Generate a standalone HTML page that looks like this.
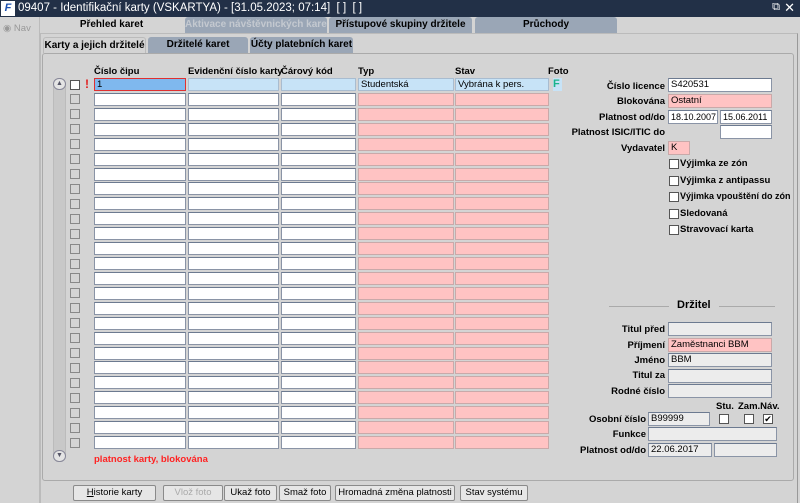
<!DOCTYPE html>
<html><head><meta charset="utf-8"><style>
*{box-sizing:border-box;margin:0;padding:0;white-space:nowrap}
body{width:800px;height:503px;background:#d4d4d4;font-family:"Liberation Sans",sans-serif;font-size:10px;position:relative;overflow:hidden;color:#000}
.a{position:absolute}
.tb{left:0;top:0;width:800px;height:17px;background:#223047;color:#fff;font-size:11.5px;line-height:17px;padding-left:18px}
.tab{position:absolute;height:16px;background:#9aa6b6;border-radius:3px 3px 0 0;font-weight:bold;text-align:center;line-height:16px;font-size:10px;overflow:hidden}
.in{position:absolute;height:14px;background:#fff;border:1px solid #8a94a6;border-top-color:#6c7a90;font-size:9.5px;line-height:12px;padding-left:2px;overflow:hidden}
.pk{background:#ffc3c3;border-color:#c9a9a9}
.gr{background:#ececec}
.lb{position:absolute;font-weight:bold;font-size:9.5px;text-align:right;width:120px;line-height:14px}
.cb{position:absolute;width:10px;height:10px;background:#fff;border:1px solid #555}
.ck{position:absolute;font-weight:bold;font-size:9.5px}
.btn{position:absolute;top:485px;height:16px;border:1px solid #8a8a8a;background:#e6e6e6;font-size:9.5px;text-align:center;line-height:14px;border-radius:2px;overflow:hidden}
.h{position:absolute;top:66px;font-weight:bold;font-size:9.5px}
</style></head><body>
<div class="a tb">09407 - Identifikační karty (VSKARTYA) - [31.05.2023; 07:14]&nbsp; [ ]&nbsp; [ ]</div>
<div class="a" style="left:1px;top:1px;width:14px;height:15px;background:#fff;color:#1a4fb0;font-weight:bold;font-size:11px;line-height:15px;text-align:center;font-style:italic">F</div>
<div class="a" style="right:20px;top:1px;color:#fff;font-size:11px">⧉</div>
<div class="a" style="right:5px;top:0;color:#fff;font-size:13px">✕</div>
<div class="a" style="left:0;top:17px;width:40px;height:486px;background:#d4d4d4;border-right:1px solid #bbb"></div>
<div class="a" style="left:3px;top:23px;color:#999;font-size:9.5px">◉ Nav</div>
<div class="tab" style="left:40px;top:17px;width:143px;background:#d4d4d4">Přehled karet</div>
<div class="tab" style="left:185px;top:17px;width:142px;color:#c4c9d0">Aktivace návštěvnických karet</div>
<div class="tab" style="left:329px;top:17px;width:143px">Přístupové skupiny držitele</div>
<div class="tab" style="left:475px;top:17px;width:142px">Průchody</div>
<div class="a" style="left:40px;top:33px;width:758px;height:470px;border-left:1px solid #bbb;border-top:1px solid #bbb;border-right:1px solid #999"></div>
<div class="tab" style="left:43px;top:37px;width:103px;background:#d4d4d4;border:1px solid #bbb;border-bottom:none;line-height:15px">Karty a jejich držitelé</div>
<div class="tab" style="left:148px;top:37px;width:100px">Držitelé karet</div>
<div class="tab" style="left:250px;top:37px;width:103px">Účty platebních karet</div>
<div class="a" style="left:42px;top:53px;width:752px;height:428px;border:1px solid #aaa;border-radius:3px"></div>
<div class="h" style="left:94px">Číslo čipu</div>
<div class="h" style="left:188px">Evidenční číslo karty</div>
<div class="h" style="left:281px">Čárový kód</div>
<div class="h" style="left:358px">Typ</div>
<div class="h" style="left:455px">Stav</div>
<div class="h" style="left:548px">Foto</div>
<div class="a" style="left:53px;top:78px;width:13px;height:384px;background:#c8c8c8;border:1px solid #bbb;border-radius:6px"></div>
<div class="a" style="left:53px;top:78px;width:13px;height:12px;background:#e4e4e4;border:1px solid #889;border-radius:6px;font-size:7px;text-align:center;line-height:10px;color:#556">▲</div>
<div class="a" style="left:53px;top:450px;width:13px;height:12px;background:#e4e4e4;border:1px solid #889;border-radius:6px;font-size:7px;text-align:center;line-height:10px;color:#556">▼</div>
<div id="rows"></div>
<div class="a" style="left:85px;top:77px;color:#e02020;font-weight:bold;font-size:12px">!</div>
<div class="a" style="left:553px;top:78px;width:9px;height:13px;background:#c7e3f7;color:#1bb38a;font-weight:bold;font-size:11px;line-height:13px">F</div>
<div class="a" style="left:94px;top:455px;color:#f22;font-weight:bold;font-size:9.5px;line-height:10px">platnost karty, blokována</div>

<div class="lb" style="left:545px;top:80px">Číslo licence</div><div class="in" style="left:668px;top:78px;width:104px">S420531</div>
<div class="lb" style="left:545px;top:95px">Blokována</div><div class="in pk" style="left:668px;top:94px;width:104px">Ostatní</div>
<div class="lb" style="left:545px;top:111px">Platnost od/do</div><div class="in" style="left:668px;top:110px;width:50px;font-size:9px">18.10.2007</div><div class="in" style="left:720px;top:110px;width:52px;font-size:9px">15.06.2011</div>
<div class="lb" style="left:545px;top:126px">Platnost ISIC/ITIC do</div><div class="in" style="left:720px;top:125px;width:52px"></div>
<div class="lb" style="left:545px;top:142px">Vydavatel</div><div class="in pk" style="left:668px;top:141px;width:22px">K</div>
<div class="cb" style="left:669px;top:159px"></div><div class="ck" style="left:680px;top:158px">Výjimka ze zón</div>
<div class="cb" style="left:669px;top:176px"></div><div class="ck" style="left:680px;top:175px">Výjimka z antipassu</div>
<div class="cb" style="left:669px;top:192px"></div><div class="ck" style="left:680px;top:191px;font-size:9px">Výjimka vpouštění do zón</div>
<div class="cb" style="left:669px;top:209px"></div><div class="ck" style="left:680px;top:208px">Sledovaná</div>
<div class="cb" style="left:669px;top:225px"></div><div class="ck" style="left:680px;top:224px">Stravovací karta</div>

<div class="a" style="left:609px;top:306px;width:60px;border-top:1px solid #aaa"></div>
<div class="a" style="left:719px;top:306px;width:56px;border-top:1px solid #aaa"></div>
<div class="a" style="left:677px;top:299px;font-weight:bold;font-size:11px">Držitel</div>
<div class="lb" style="left:545px;top:323px">Titul před</div><div class="in gr" style="left:668px;top:322px;width:104px"></div>
<div class="lb" style="left:545px;top:339px">Příjmení</div><div class="in pk" style="left:668px;top:338px;width:104px">Zaměstnanci BBM</div>
<div class="lb" style="left:545px;top:354px">Jméno</div><div class="in gr" style="left:668px;top:353px;width:104px">BBM</div>
<div class="lb" style="left:545px;top:369px">Titul za</div><div class="in gr" style="left:668px;top:369px;width:104px"></div>
<div class="lb" style="left:545px;top:385px">Rodné číslo</div><div class="in gr" style="left:668px;top:384px;width:104px"></div>
<div class="ck" style="left:716px;top:401px">Stu.</div><div class="ck" style="left:738px;top:401px">Zam.Náv.</div>
<div class="lb" style="left:526px;top:413px">Osobní číslo</div><div class="in gr" style="left:648px;top:412px;width:62px">B99999</div>
<div class="cb" style="left:719px;top:414px"></div><div class="cb" style="left:744px;top:414px"></div><div class="cb" style="left:763px;top:414px;font-size:9px;line-height:8px;text-align:center">✔</div>
<div class="lb" style="left:526px;top:428px">Funkce</div><div class="in gr" style="left:648px;top:427px;width:129px"></div>
<div class="lb" style="left:526px;top:444px">Platnost od/do</div><div class="in gr" style="left:648px;top:443px;width:64px">22.06.2017</div><div class="in gr" style="left:714px;top:443px;width:63px"></div>

<div class="btn" style="left:73px;width:83px"><u>H</u>istorie karty</div>
<div class="btn" style="left:163px;width:60px;color:#aaa">Vlož foto</div>
<div class="btn" style="left:224px;width:53px">Ukaž foto</div>
<div class="btn" style="left:279px;width:52px">Smaž foto</div>
<div class="btn" style="left:335px;width:120px">Hromadná změna platnosti</div>
<div class="btn" style="left:460px;width:68px">Stav systému</div>
<script>
var h='';for(var i=0;i<25;i++){var t=78+i*14.92;var f=i==0;
h+='<div class="cb" style="left:70px;top:'+(t+1.5)+'px;'+(f?'':'background:#d4d4d4;border-color:#888')+'"></div>';
var c=[[94,92],[188,91],[281,75],[358,96],[455,94]];
for(var j=0;j<5;j++){var bg=j>=3?'background:#ffc3c3;border-color:#c9a9a9;':'';
if(f)bg=j==0?'background:#7fb8ee;border:1px solid #e03030;':'background:#c7e3f7;border-color:#a8bcd0;';
var tx=f?['1','','','Studentská','Vybrána k pers.'][j]:'';
h+='<div class="in" style="left:'+c[j][0]+'px;top:'+t+'px;width:'+c[j][1]+'px;height:13px;'+bg+'">'+tx+'</div>';}}
document.getElementById('rows').innerHTML=h;
</script>
</body></html>
